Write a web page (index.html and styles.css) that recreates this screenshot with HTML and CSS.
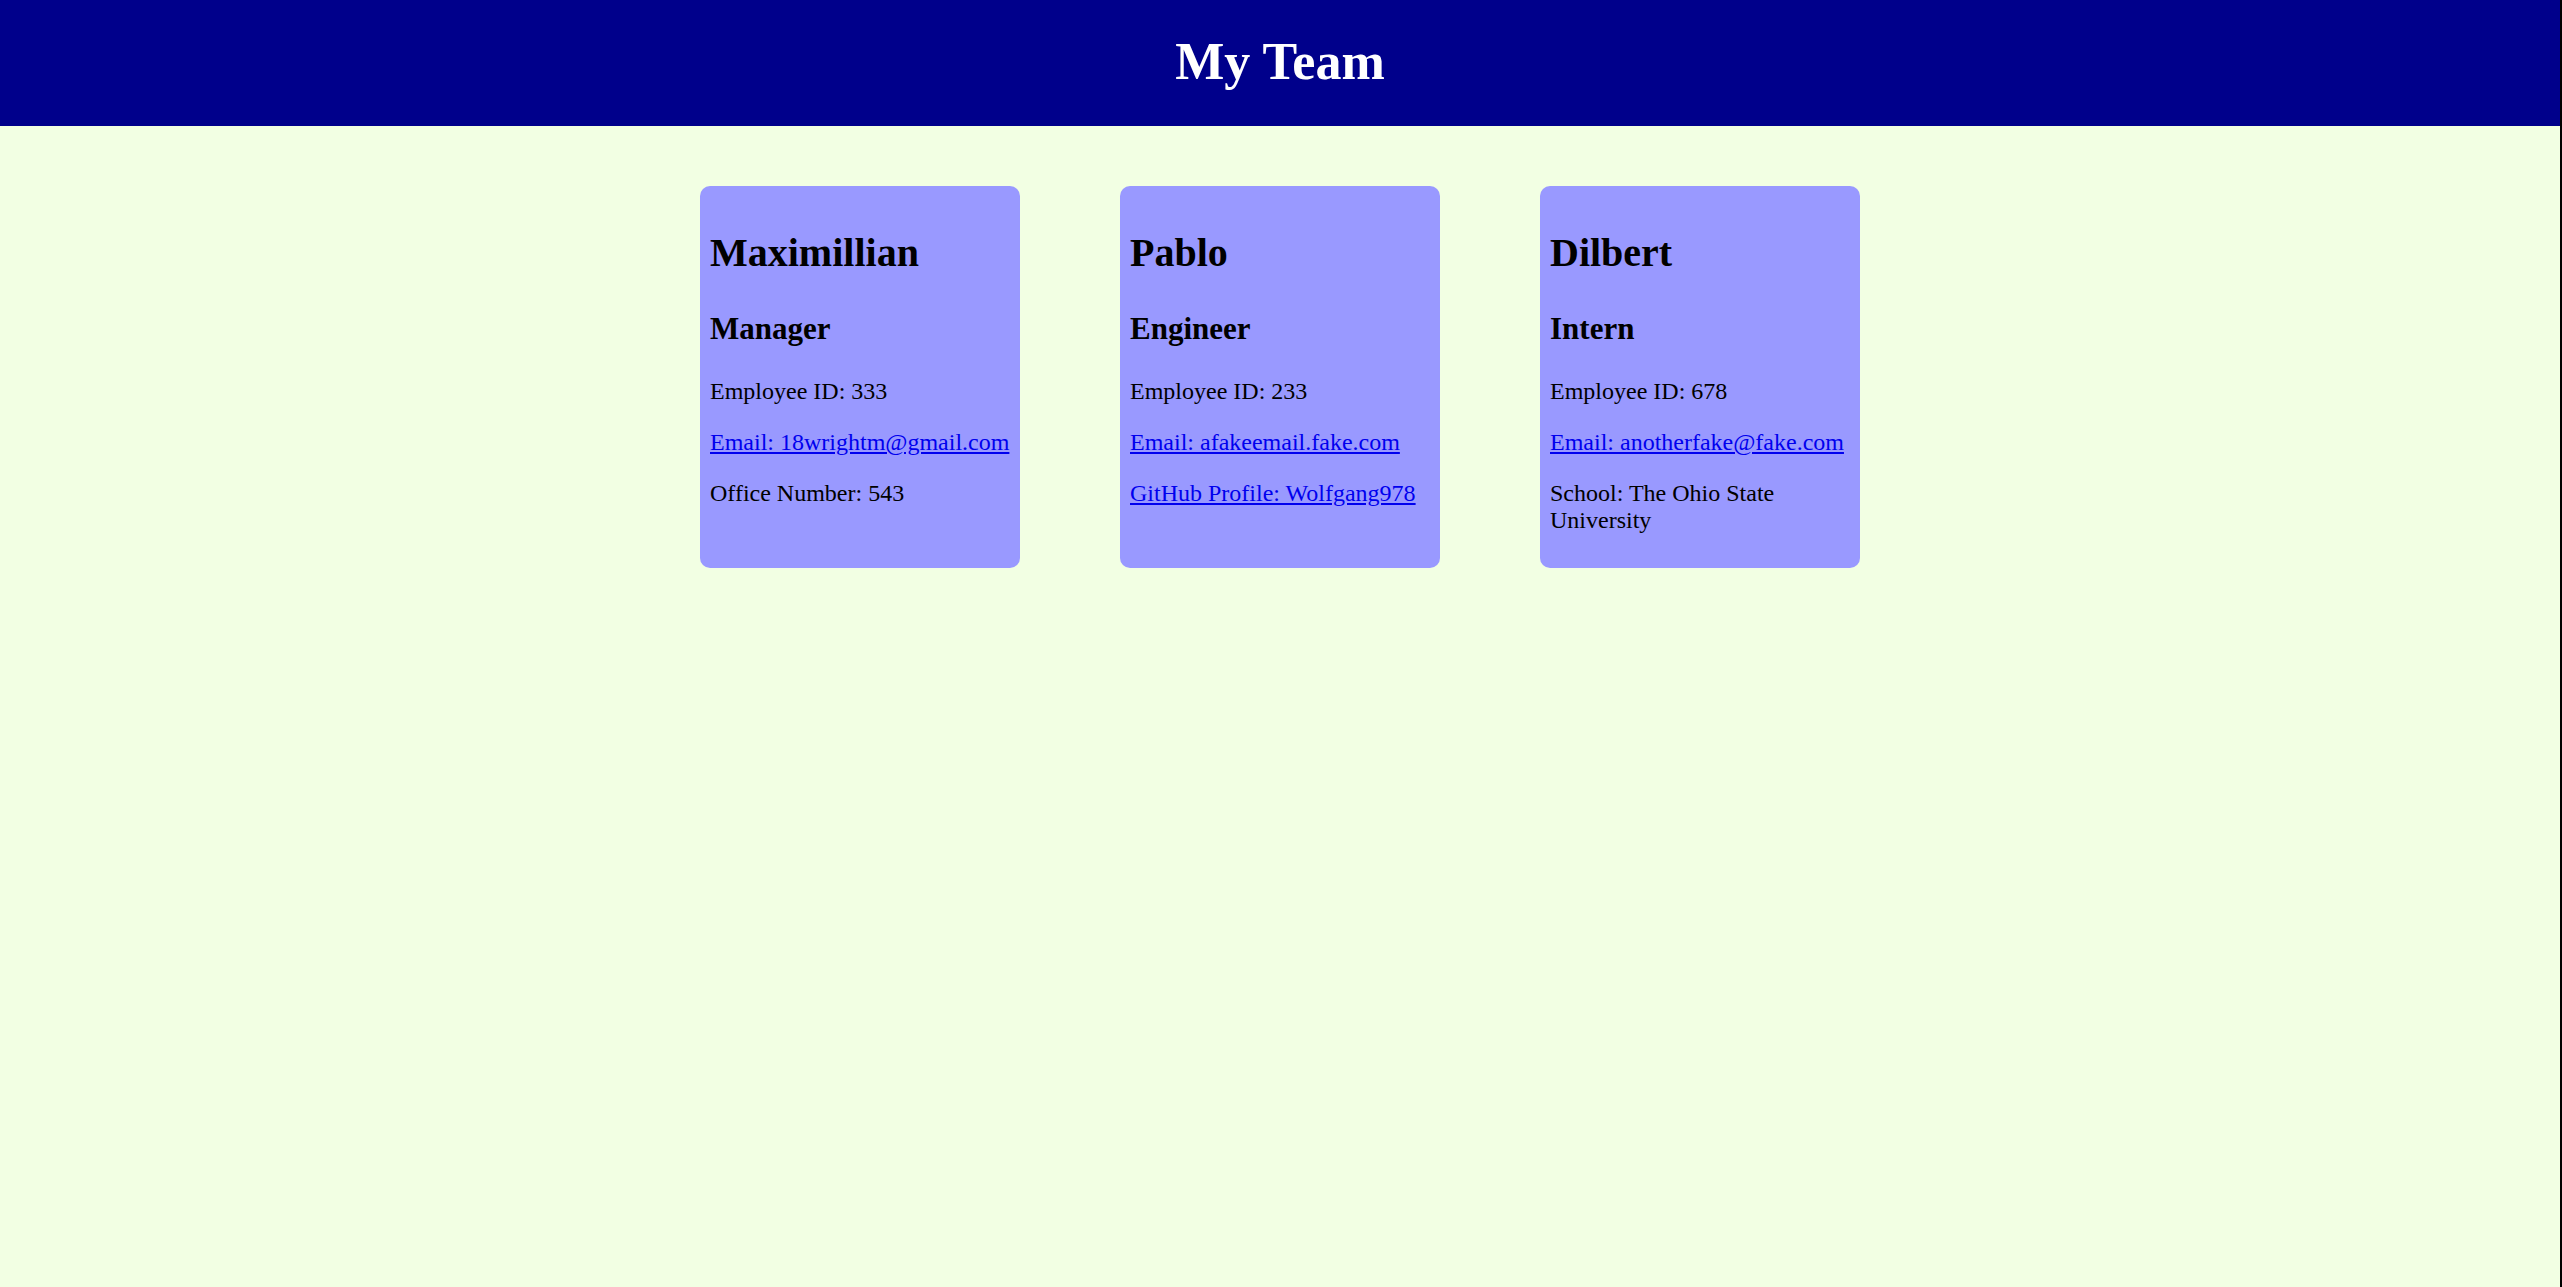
FILE: index.html
```html
<!DOCTYPE html>
<html lang="en">
<head>
<meta charset="UTF-8">
<title>My Team</title>
<link rel="stylesheet" href="styles.css">
</head>
<body>
<header class="top">
  <h1 class="top-title">My Team</h1>
</header>
<main class="team">
  <div class="card">
    <h2 class="card-name">Maximillian</h2>
    <h3 class="card-role">Manager</h3>
    <p class="card-line">Employee ID: 333</p>
    <p class="card-line"><a class="card-link" href="#">Email: 18wrightm@gmail.com</a></p>
    <p class="card-line">Office Number: 543</p>
  </div>
  <div class="card">
    <h2 class="card-name">Pablo</h2>
    <h3 class="card-role">Engineer</h3>
    <p class="card-line">Employee ID: 233</p>
    <p class="card-line"><a class="card-link" href="#">Email: afakeemail.fake.com</a></p>
    <p class="card-line"><a class="card-link" href="#">GitHub Profile: Wolfgang978</a></p>
  </div>
  <div class="card">
    <h2 class="card-name">Dilbert</h2>
    <h3 class="card-role">Intern</h3>
    <p class="card-line">Employee ID: 678</p>
    <p class="card-line"><a class="card-link" href="#">Email: anotherfake@fake.com</a></p>
    <p class="card-line">School: The Ohio State University</p>
  </div>
</main>
</body>
</html>
```
FILE: styles.css
```css
html, body {
  margin: 0;
  padding: 0;
}
body {
  background: #f2ffe3;
  font-family: "Liberation Serif", "Times New Roman", serif;
  font-size: 24px;
  color: #000;
  min-height: 1287px;
  border-right: 2px solid #000;
}
.top {
  background: #00008b;
  height: 126px;
  box-sizing: border-box;
  padding-top: 32px;
  text-align: center;
}
.top-title {
  margin: 0;
  color: #fff;
  font-size: 52px;
  font-weight: bold;
}
.team {
  display: flex;
  justify-content: center;
  align-items: stretch;
  gap: 100px;
  padding-top: 60px;
}
.card {
  width: 320px;
  box-sizing: border-box;
  background: #9999ff;
  border-radius: 10px;
  padding: 10px 10px 10px;
}
.card-name {
  font-size: 40px;
  margin: 33px 0 35px;
}
.card-role {
  font-size: 31px;
  margin: 35px 0 31px;
}
.card-line {
  margin: 24px 0;
}
.card-link {
  color: #0000ee;
}
```
